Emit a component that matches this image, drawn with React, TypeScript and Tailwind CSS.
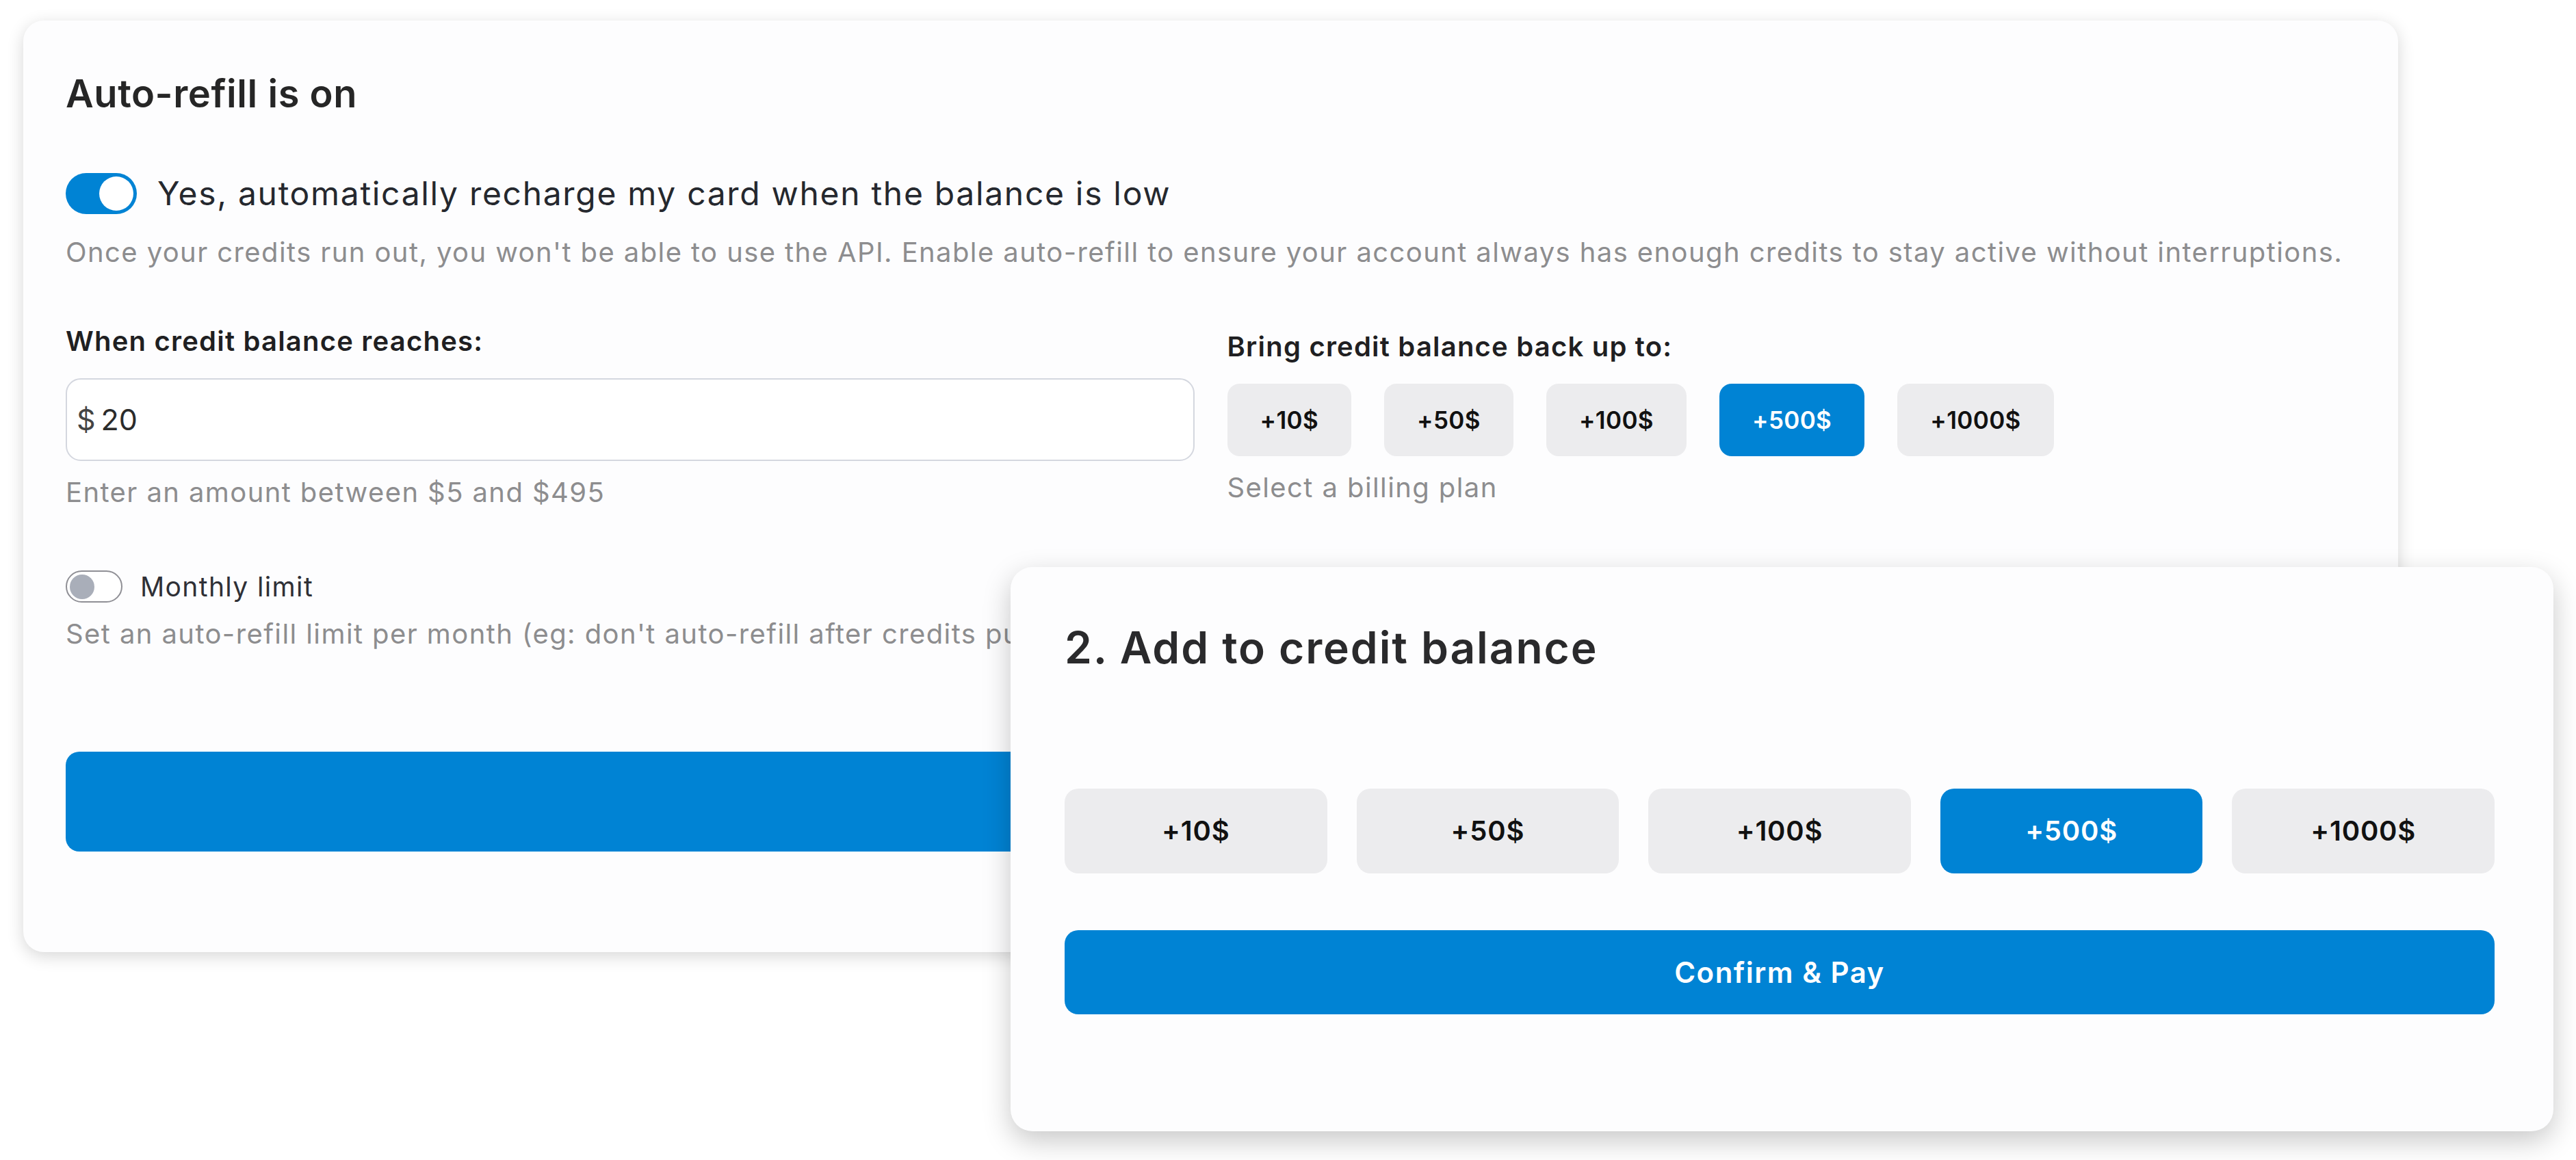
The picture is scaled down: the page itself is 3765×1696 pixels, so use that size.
const amounts = ["+10$", "+50$", "+100$", "+500$", "+1000$"];

function Toggle({ on }: { on: boolean }) {
  if (on) {
    return (
      <div className="flex h-[60px] w-[104px] shrink-0 items-center justify-end rounded-full bg-[#0083d4] px-[5px]">
        <div className="h-[50px] w-[50px] rounded-full bg-white" />
      </div>
    );
  }
  return (
    <div className="flex h-[47px] w-[83px] shrink-0 items-center rounded-full border-[2.5px] border-[#8f8f95] bg-white px-[4px]">
      <div className="h-[36px] w-[36px] rounded-full bg-[#a9aeb9]" />
    </div>
  );
}

function AutoRefillCard() {
  return (
    <div className="ml-[34px] mt-[30px] h-[1362px] w-[3471px] rounded-[30px] bg-[#fdfdfe] pl-[62px] pr-[62px] pt-[74px] shadow-[0_6px_24px_rgba(0,0,0,0.16)]">
      <h1 className="text-[56px] font-semibold leading-[1.2] tracking-[0.01em] text-[#262626]">Auto-refill is on</h1>

      <div className="mt-[82px] flex items-center gap-[30px]">
        <Toggle on />
        <span className="text-[48px] leading-[60px] tracking-[0.035em] text-[#25282e]">
          Yes, automatically recharge my card when the balance is low
        </span>
      </div>
      <p className="mt-[32px] text-[40px] leading-[1.2] tracking-[0.035em] text-[#8d8d8f]">
        Once your credits run out, you won't be able to use the API. Enable auto-refill to ensure your account always has enough credits to stay active without interruptions.
      </p>

      <div className="mt-[82px] grid grid-cols-2 gap-[48px]">
        <div>
          <div className="text-[40px] font-semibold leading-[1.2] tracking-[0.03em] text-[#1f1f22]">When credit balance reaches:</div>
          <div className="mt-[30px] flex h-[121px] items-center rounded-[22px] border-2 border-[#d4d7df] bg-white px-[14px] text-[43px] text-[#2b2b2b]">
            <span className="mr-[8px] text-[#444]">$</span>20
          </div>
          <div className="mt-[22px] text-[40px] leading-[1.2] tracking-[0.035em] text-[#8d8d8f]">Enter an amount between $5 and $495</div>
        </div>
        <div className="pt-[8px]">
          <div className="text-[40px] font-semibold leading-[1.2] tracking-[0.03em] text-[#1f1f22]">Bring credit balance back up to:</div>
          <div className="mt-[30px] flex gap-[48px]">
            {amounts.map((a) => (
              <button
                key={a}
                className={
                  a === "+500$"
                    ? "h-[106px] rounded-[18px] bg-[#0083d4] px-[48px] text-[35px] font-semibold tracking-[0.01em] text-white"
                    : "h-[106px] rounded-[18px] bg-[#ececee] px-[48px] text-[35px] font-semibold tracking-[0.01em] text-[#111]"
                }
              >
                {a}
              </button>
            ))}
          </div>
          <div className="mt-[22px] text-[40px] leading-[1.2] tracking-[0.035em] text-[#8d8d8f]">Select a billing plan</div>
        </div>
      </div>

      <div className="mt-[90px] flex items-center gap-[26px]">
        <Toggle on={false} />
        <span className="text-[39px] leading-[47px] tracking-[0.035em] text-[#2f3036]">Monthly limit</span>
      </div>
      <div className="mt-[22px] w-[1381px] overflow-hidden">
        <p className="whitespace-nowrap text-[40px] leading-[1.2] tracking-[0.035em] text-[#8d8d8f]">
          Set an auto-refill limit per month (eg: don't auto-refill after credits purchased reach $1000 this month)
        </p>
      </div>

      <button className="mt-[148px] h-[146px] w-full rounded-[20px] bg-[#0083d4]" />
    </div>
  );
}

function AddBalanceCard() {
  return (
    <div className="absolute left-[1477px] top-[829px] h-[825px] w-[2255px] rounded-[32px] bg-[#fdfdfe] pl-[79px] pr-[86px] pt-[80px] shadow-[0_14px_40px_rgba(0,0,0,0.22)]">
      <h2 className="text-[64px] font-semibold leading-[1.2] tracking-[0.03em] text-[#2a2a2c]">2. Add to credit balance</h2>
      <div className="mt-[167px] grid grid-cols-5 gap-[43px]">
        {amounts.map((a) => (
          <button
            key={a}
            className={
              a === "+500$"
                ? "h-[124px] rounded-[20px] bg-[#0083d4] text-[40px] font-semibold tracking-[0.02em] text-white"
                : "h-[124px] rounded-[20px] bg-[#ececee] text-[40px] font-semibold tracking-[0.02em] text-[#111]"
            }
          >
            {a}
          </button>
        ))}
      </div>
      <button className="mt-[83px] h-[123px] w-full rounded-[20px] bg-[#0083d4] text-[42px] font-semibold tracking-[0.035em] text-white">
        Confirm &amp; Pay
      </button>
    </div>
  );
}

export default function App() {
  return (
    <div className="relative h-[1696px] w-[3765px] overflow-hidden bg-white font-['Inter','Open_Sans',sans-serif]">
      <AutoRefillCard />
      <AddBalanceCard />
    </div>
  );
}
